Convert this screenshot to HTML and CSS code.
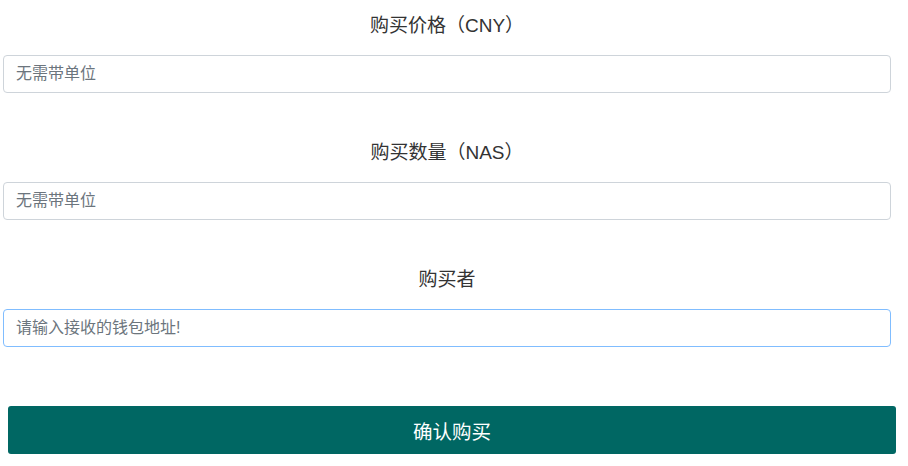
FILE: index.html
```html
<!DOCTYPE html>
<html lang="zh">
<head>
<meta charset="utf-8">
<link rel="stylesheet" href="styles.css">
</head>
<body>
<form class="form">
  <div class="group">
    <label class="label">购买价格（CNY）</label>
    <input class="input" type="text" placeholder="无需带单位">
  </div>
  <div class="group">
    <label class="label">购买数量（NAS）</label>
    <input class="input" type="text" placeholder="无需带单位">
  </div>
  <div class="group">
    <label class="label">购买者</label>
    <input class="input focus" type="text" placeholder="请输入接收的钱包地址!">
  </div>
  <div class="actions">
    <button class="btn" type="button">确认购买</button>
  </div>
</form>
</body>
</html>
```
FILE: styles.css
```css
html, body {
  margin: 0;
  padding: 0;
  background: #fff;
}
body {
  font-family: "Liberation Sans", "Noto Sans CJK SC", sans-serif;
  color: #333;
}
.form {
  width: 888px;
  padding: 12px 0 0 3px;
}
.group {
  display: flex;
  flex-direction: column;
  margin-bottom: 46px;
}
.label {
  display: block;
  text-align: center;
  font-size: 19px;
  line-height: 27px;
  height: 27px;
  margin-bottom: 16px;
  color: #333;
}
.input {
  box-sizing: border-box;
  height: 38px;
  width: 888px;
  border: 1px solid #ced4da;
  border-radius: 4px;
  padding: 0 12px;
  font-family: "Liberation Sans", "Noto Sans CJK SC", sans-serif;
  font-size: 16px;
  color: #495057;
  outline: none;
  margin: 0;
}
.input::placeholder {
  color: #6c757d;
}
.input.focus {
  border-color: #80bdff;
}
.actions {
  padding-top: 13px;
  padding-left: 5px;
}
.btn {
  display: block;
  box-sizing: border-box;
  width: 888px;
  height: 48px;
  border: none;
  border-radius: 3px;
  background: #006763;
  color: #fff;
  font-family: "Liberation Sans", "Noto Sans CJK SC", sans-serif;
  font-size: 19.5px;
  margin: 0;
  padding: 0;
}
```
